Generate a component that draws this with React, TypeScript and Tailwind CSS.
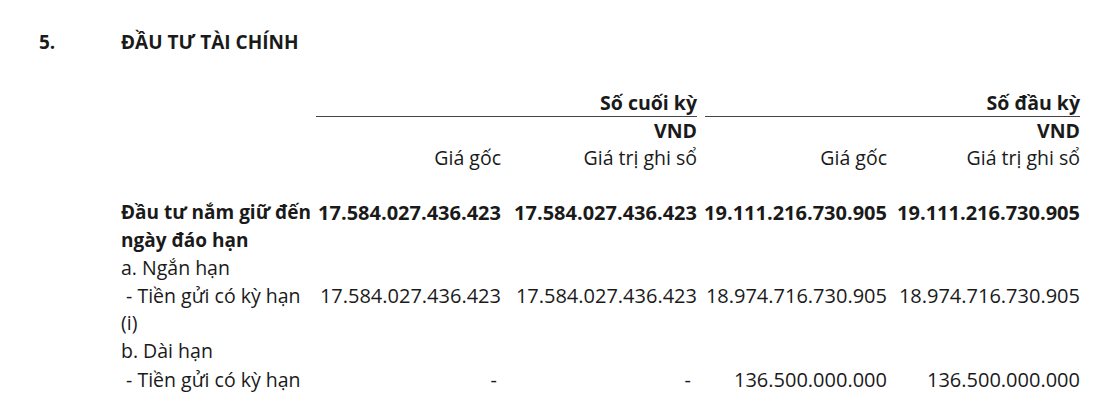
import React from "react";

const Num = ({ children, bold = false }: { children?: React.ReactNode; bold?: boolean }) => (
  <div className={`text-right text-[20px] ${bold ? "font-bold" : ""}`}>{children}</div>
);

export default function App() {
  return (
    <div
      className="w-[1107px] h-[412px] bg-white text-[#1a1a1a] overflow-hidden"
      style={{ fontFamily: '"Open Sans", "Noto Sans", sans-serif' }}
    >
      <div className="flex items-center mt-[28px] h-[28px] text-[19px] font-bold">
        <div className="w-[121px] pl-[39px]">5.</div>
        <div>ĐẦU TƯ TÀI CHÍNH</div>
      </div>

      <div className="mt-[33px] pl-[121px] text-[19.5px]">
        <div className="grid grid-cols-[195px_185px_196px_190px_193px] leading-[27px]">
          <div />
          <div className="col-span-2 border-b-[1.5px] border-[#444] text-right font-bold">Số cuối kỳ</div>
          <div className="col-span-2 ml-[8px] border-b-[1.5px] border-[#444] text-right font-bold">Số đầu kỳ</div>

          <div />
          <div />
          <div className="text-right font-bold">VND</div>
          <div />
          <div className="text-right font-bold">VND</div>

          <div />
          <div className="text-right">Giá gốc</div>
          <div className="text-right">Giá trị ghi sổ</div>
          <div className="text-right">Giá gốc</div>
          <div className="text-right">Giá trị ghi sổ</div>
        </div>

        <div className="mt-[28px] grid grid-cols-[195px_185px_196px_190px_193px] leading-[27.5px] items-start">
          <div className="font-bold whitespace-nowrap text-[19px]">
            Đầu tư nắm giữ đến
            <br />
            ngày đáo hạn
          </div>
          <Num bold>17.584.027.436.423</Num>
          <Num bold>17.584.027.436.423</Num>
          <Num bold>19.111.216.730.905</Num>
          <Num bold>19.111.216.730.905</Num>

          <div className="col-span-5">a. Ngắn hạn</div>

          <div className="whitespace-nowrap">
            &nbsp;- Tiền gửi có kỳ hạn
            <br />
            (i)
          </div>
          <Num>17.584.027.436.423</Num>
          <Num>17.584.027.436.423</Num>
          <Num>18.974.716.730.905</Num>
          <Num>18.974.716.730.905</Num>

          <div className="col-span-5">b. Dài hạn</div>

          <div className="whitespace-nowrap mt-[2px]">&nbsp;- Tiền gửi có kỳ hạn</div>
          <div className="text-right pr-[4px] mt-[2px] text-[20px]">-</div>
          <div className="text-right pr-[6px] mt-[2px] text-[20px]">-</div>
          <div className="text-right mt-[2px] text-[20px]">136.500.000.000</div>
          <div className="text-right mt-[2px] text-[20px]">136.500.000.000</div>
        </div>
      </div>
    </div>
  );
}
